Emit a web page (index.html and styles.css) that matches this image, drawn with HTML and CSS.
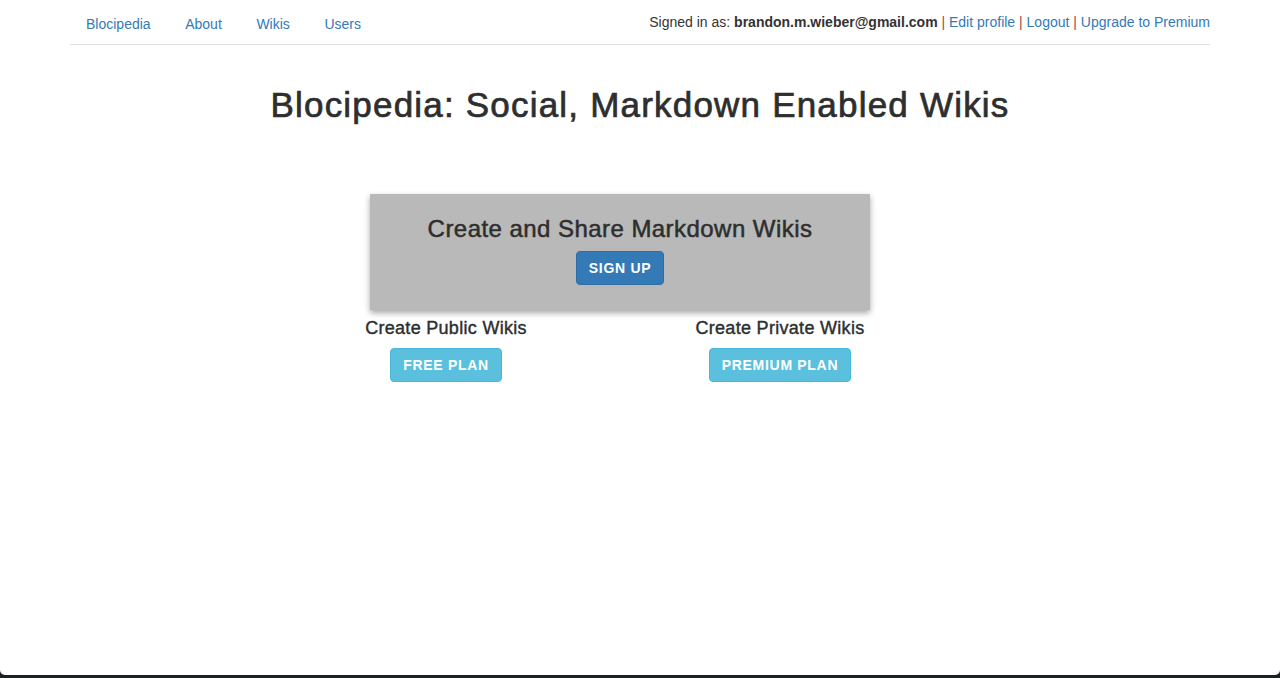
FILE: index.html
```html
<!DOCTYPE html>
<html>
<head>
<meta charset="utf-8">
<title>Blocipedia</title>
<link rel="stylesheet" href="styles.css">
</head>
<body>
<div class="page">
  <div class="container">
    <nav class="topbar">
      <ul class="nav-links">
        <li><a href="#">Blocipedia</a></li>
        <li><a href="#">About</a></li>
        <li><a href="#">Wikis</a></li>
        <li><a href="#">Users</a></li>
      </ul>
      <div class="user-info">
        Signed in as: <strong>brandon.m.wieber@gmail.com</strong> <span class="sep">|</span> <a href="#">Edit profile</a> <span class="sep">|</span> <a href="#">Logout</a> <span class="sep">|</span> <a href="#">Upgrade to Premium</a>
      </div>
    </nav>
    <h1 class="title">Blocipedia: Social, Markdown Enabled Wikis</h1>
    <section class="hero">
      <h3 class="hero-title">Create and Share Markdown Wikis</h3>
      <a href="#" class="btn btn-primary">SIGN UP</a>
    </section>
    <div class="plans">
      <div class="plan">
        <h4 class="plan-title">Create Public Wikis</h4>
        <a href="#" class="btn btn-info">FREE PLAN</a>
      </div>
      <div class="plan">
        <h4 class="plan-title">Create Private Wikis</h4>
        <a href="#" class="btn btn-info">PREMIUM PLAN</a>
      </div>
    </div>
  </div>
</div>
<div class="window-edge"></div>
</body>
</html>
```
FILE: styles.css
```css
* { box-sizing: border-box; }
html, body { margin: 0; padding: 0; }
body {
  font-family: "Liberation Sans", Arial, Helvetica, sans-serif;
  font-size: 14px;
  color: #333;
  background: #1b2224;
  height: 678px;
  overflow: hidden;
}
.page {
  background: #fff;
  height: 675px;
  border-radius: 0 0 5px 5px;
}
a { color: #337ab7; text-decoration: none; }
.container {
  width: 1140px;
  margin: 0 auto;
}
.topbar {
  display: flex;
  justify-content: space-between;
  border-bottom: 1px solid #ddd;
  height: 45px;
}
.nav-links {
  list-style: none;
  margin: 0;
  padding: 0 0 0 16px;
  display: flex;
  gap: 34.6px;
  line-height: 20px;
  padding-top: 14px;
}
.user-info {
  padding-top: 12px;
  line-height: 20px;
}
.user-info strong { font-weight: bold; color: #333; }
.sep { color: #a94442; }
.title {
  text-align: center;
  font-size: 35px;
  font-weight: normal;
  letter-spacing: 1.2px;
  -webkit-text-stroke: 0.7px #2e2e2e;
  margin: 40px 0 0;
  line-height: 40px;
  color: #2e2e2e;
}
.hero {
  width: 500px;
  margin: 69px 0 0 300px;
  background: #b9b9b9;
  box-shadow: 0 3px 6px rgba(0,0,0,0.35);
  text-align: center;
  padding: 20px 0 25px;
  height: 116px;
}
.hero-title {
  font-size: 24px;
  font-weight: normal;
  letter-spacing: 0.45px;
  -webkit-text-stroke: 0.5px #2e2e2e;
  margin: 0 0 7px;
  line-height: 30px;
  color: #2e2e2e;
}
.btn {
  display: inline-block;
  font-weight: bold;
  font-size: 14px;
  line-height: 20px;
  padding: 6px 12px;
  border: 1px solid transparent;
  border-radius: 4px;
  color: #fff;
  letter-spacing: 0.7px;
}
.btn-primary { background: #337ab7; border-color: #2e6da4; }
.btn-info { background: #5bc0de; border-color: #46b8da; }
.plans {
  display: flex;
  margin-left: 276px;
  gap: 134px;
  margin-top: 8px;
}
.plan {
  width: 200px;
  text-align: center;
}
.plan-title {
  font-size: 18px;
  font-weight: normal;
  letter-spacing: 0.3px;
  -webkit-text-stroke: 0.4px #2e2e2e;
  margin: 0 0 10px;
  line-height: 20px;
  color: #2e2e2e;
}
.window-edge { height: 3px; }
```
